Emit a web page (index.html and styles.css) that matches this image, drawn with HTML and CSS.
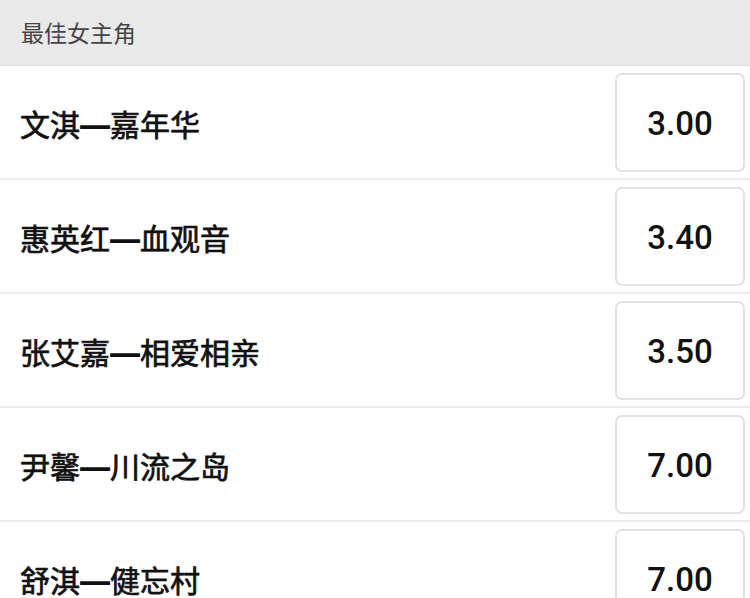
FILE: index.html
```html
<!DOCTYPE html>
<html lang="zh-CN">
<head>
<meta charset="utf-8">
<link rel="stylesheet" href="styles.css">
</head>
<body>
<div class="page">
  <div class="section-header">最佳女主角</div>
  <div class="row"><span class="name">文淇<span class="dash">—</span>嘉年华</span><div class="odds">3.00</div></div>
  <div class="row"><span class="name">惠英红<span class="dash">—</span>血观音</span><div class="odds">3.40</div></div>
  <div class="row"><span class="name">张艾嘉<span class="dash">—</span>相爱相亲</span><div class="odds">3.50</div></div>
  <div class="row"><span class="name">尹馨<span class="dash">—</span>川流之岛</span><div class="odds">7.00</div></div>
  <div class="row"><span class="name">舒淇<span class="dash">—</span>健忘村</span><div class="odds">7.00</div></div>
</div>
</body>
</html>
```
FILE: styles.css
```css
html, body {
  margin: 0;
  padding: 0;
  background: #ffffff;
}
body {
  width: 750px;
  height: 598px;
  overflow: hidden;
  font-family: "Noto Sans CJK SC", "Noto Sans", sans-serif;
}
.page {
  display: flex;
  flex-direction: column;
}
.section-header {
  height: 66px;
  box-sizing: border-box;
  border-bottom: 1px solid #dedede;
  background: #e9e9e9;
  color: #454545;
  font-size: 23px;
  display: flex;
  align-items: center;
  padding-left: 21px;
  padding-bottom: 1px;
}
.row {
  display: flex;
  align-items: center;
  justify-content: space-between;
  height: 114px;
  box-sizing: border-box;
  padding: 7px 5px 6px 20px;
  border-bottom: 2px solid #ececec;
  flex-shrink: 0;
}
.name {
  font-size: 30px;
  font-weight: 400;
  color: #111111;
  -webkit-text-stroke: 0.7px #111111;
}
.dash {
  display: inline-block;
  width: 1em;
  text-align: center;
  font-family: "DejaVu Sans", sans-serif;
  font-weight: 700;
  transform: scaleX(1.12) translateY(-0.05em);
  -webkit-text-stroke: 0;
}
.odds {
  width: 130px;
  height: 99px;
  box-sizing: border-box;
  border: 2px solid #e2e2e2;
  border-radius: 7px;
  display: flex;
  align-items: center;
  justify-content: center;
  font-family: "Roboto", "Liberation Sans", sans-serif;
  font-size: 33px;
  font-weight: 500;
  color: #111111;
  padding-top: 1px;
}
```
